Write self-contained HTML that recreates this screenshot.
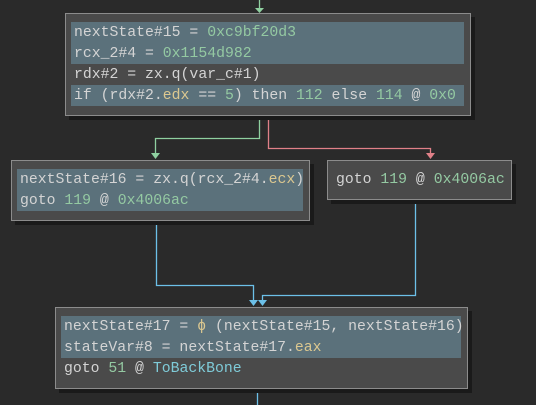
<!DOCTYPE html><html><head><style>
body{margin:0;width:536px;height:405px;background:#2a2a2a;overflow:hidden;position:relative;font-family:"Liberation Mono","DejaVu Sans Mono",monospace;font-size:14.8px;color:#d4d4d4}
.b{position:absolute;background:#4a4a4a;border:1px solid #8c8c8c;box-shadow:4px 4px 0 #1a1a1a;box-sizing:border-box}
.r{position:absolute;height:21px;line-height:23px;white-space:pre;padding-left:3px}
.h{background:#5b717b}
.n{color:#94c9a2}.y{color:#dcc890}.c{color:#7fcbd8}
svg{position:absolute;left:0;top:0}
</style></head><body>
<svg width="536" height="405">
<g fill="none" stroke-width="1.3">
<path d="M259.5 0V10" stroke="#8fd0a0"/>
<path d="M259.5 115V138.5H155.5V156" stroke="#8fd0a0"/>
<path d="M268.5 115V148.5H430.5V156" stroke="#e08088"/>
<path d="M156.5 220V285.5H253.5V303" stroke="#6cc0e8"/>
<path d="M415.5 199V295.5H262.5V303" stroke="#6cc0e8"/>
<path d="M257.5 388V405" stroke="#6cc0e8"/>
</g>
<path d="M255 8h9l-4.5 5z" fill="#8fd0a0"/>
<path d="M151 153h9l-4.5 6z" fill="#8fd0a0"/>
<path d="M426 153h9l-4.5 6z" fill="#e08088"/>
<path d="M249 300h9l-4.5 6z" fill="#6cc0e8"/>
<path d="M258 300h9l-4.5 6z" fill="#6cc0e8"/>
</svg>
<div class="b" style="left:65px;top:13px;width:406px;height:103px"></div>
<div class="r h" style="left:71px;top:22px;width:390px;height:42px"></div>
<div class="r" style="left:71px;top:22px">nextState#15 = <span class="n">0xc9bf20d3</span></div>
<div class="r" style="left:71px;top:43px">rcx_2#4 = <span class="n">0x1154d982</span></div>
<div class="r" style="left:71px;top:64px">rdx#2 = zx.q(var_c#1)</div>
<div class="r h" style="left:71px;top:85px;width:390px;overflow:hidden">if (rdx#2.<span class="y">edx</span> == <span class="n">5</span>) then <span class="n">112</span> else <span class="n">114</span> @ <span class="n">0x0</span></div>

<div class="b" style="left:11px;top:160px;width:299px;height:61px"></div>
<div class="r h" style="left:17px;top:169px;width:283px;height:42px"></div>
<div class="r" style="left:17px;top:169px">nextState#16 = zx.q(rcx_2#4.<span class="y">ecx</span>)</div>
<div class="r" style="left:17px;top:190px">goto <span class="n">119</span> @ <span class="n">0x4006ac</span></div>

<div class="b" style="left:327px;top:160px;width:185px;height:40px"></div>
<div class="r" style="left:333px;top:169px">goto <span class="n">119</span> @ <span class="n">0x4006ac</span></div>

<div class="b" style="left:55px;top:307px;width:413px;height:82px"></div>
<div class="r h" style="left:61px;top:316px;width:397px;height:42px"></div>
<div class="r" style="left:61px;top:316px">nextState#17 = <span class="y">ϕ</span> (nextState#15, nextState#16)</div>
<div class="r" style="left:61px;top:337px">stateVar#8 = nextState#17.<span class="y">eax</span></div>
<div class="r" style="left:61px;top:358px">goto <span class="n">51</span> @ <span class="c">ToBackBone</span></div>
</body></html>
